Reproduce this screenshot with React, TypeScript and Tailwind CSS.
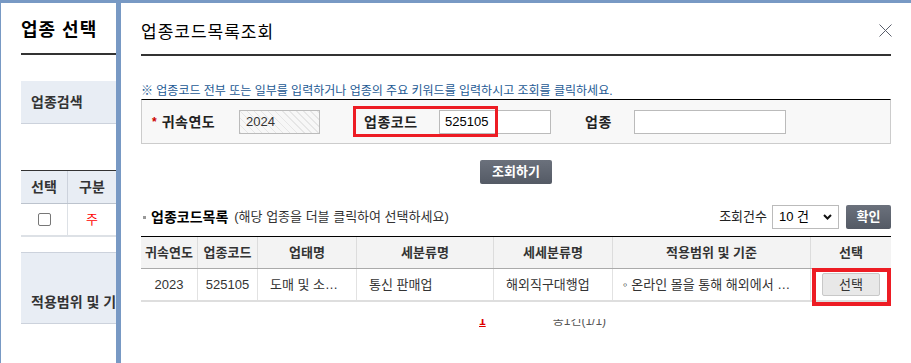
import React from "react";

function CloseIcon() {
  return (
    <svg width="13" height="13" viewBox="0 0 13 13" className="block">
      <path d="M0.5 0.5 L12.5 12.5 M12.5 0.5 L0.5 12.5" stroke="#5a5f6b" strokeWidth="1" fill="none" />
    </svg>
  );
}

function Chevron() {
  return (
    <svg width="9" height="6" viewBox="0 0 9 6" className="block">
      <path d="M1 1 L4.5 4.5 L8 1" stroke="#111" strokeWidth="2" fill="none" />
    </svg>
  );
}

function LeftPanel() {
  return (
    <div className="w-[116px] shrink-0 border-l border-[#7899c4] pl-[20px] overflow-hidden flex flex-col">
      <div className="pt-[16px] leading-[22px] text-[18px] tracking-[1px] font-bold text-black whitespace-nowrap">업종 선택</div>
      <div className="mt-[12px] h-[2px] bg-[#333] w-[200px]" />
      <div className="mt-[26px] h-[43px] w-[200px] bg-[#e8edf4] border-b border-[#ccd2dc] flex items-center pl-[10px] text-[14px] font-bold text-[#333] whitespace-nowrap">
        업종검색
      </div>
      <div className="mt-[46px] w-[200px] border-t border-[#333]">
        <div className="flex h-[33px] bg-[#e8edf4] border-b border-[#bcc3cd]">
          <div className="w-[47px] flex items-center justify-center text-[14px] font-bold text-[#333] border-r border-[#ccd2dc]">선택</div>
          <div className="w-[48px] flex items-center justify-center text-[14px] font-bold text-[#333]">구분</div>
        </div>
        <div className="flex h-[33px] border-b-2 border-[#dde1e6]">
          <div className="w-[47px] flex items-center justify-center border-r border-[#dde1e6]">
            <div className="w-[13px] h-[13px] rounded-[2px] border border-[#777] bg-white" />
          </div>
          <div className="w-[48px] flex items-center justify-center text-[13px] text-[#ff0000]">주</div>
        </div>
      </div>
      <div className="mt-[15px] h-[72px] w-[200px] bg-[#e8edf4] border-t border-b border-[#ccd2dc] flex items-end pb-[13px] pl-[10px] text-[14px] font-bold text-[#333] whitespace-nowrap leading-[16px]">
        적용범위 및 기준
      </div>
    </div>
  );
}

function SearchBox() {
  return (
    <div className="relative mt-0 h-[45px] bg-[#f8f8f8] border-t border-t-black border-l border-r border-b border-l-[#ccc] border-r-[#ccc] border-b-[#ccc] flex items-center">
      <div className="w-[97px] flex items-center pl-[10px] whitespace-nowrap">
        <span className="text-[#c00] text-[12px] font-bold mr-[5px] leading-none">*</span>
        <span className="text-[14px] tracking-[0.5px] font-bold text-[#222]">귀속연도</span>
      </div>
      <div className="w-[81px] h-[24px] border border-[#bbb] flex items-center pl-[6px] text-[13px] text-[#333] bg-[repeating-linear-gradient(45deg,#e6e6e6_0px,#e6e6e6_1px,#f7f7f7_1px,#f7f7f7_5px)]">
        2024
      </div>
      <div className="w-[44px]" />
      <div className="w-[75px] text-[14px] tracking-[0.5px] font-bold text-[#222] whitespace-nowrap">업종코드</div>
      <div className="w-[112px] h-[24px] border border-[#bbb] bg-white flex items-center pl-[5px] text-[13px] text-black">525105</div>
      <div className="w-[34px]" />
      <div className="w-[49px] text-[14px] tracking-[0.5px] font-bold text-[#222] whitespace-nowrap">업종</div>
      <div className="w-[152px] h-[24px] border border-[#bbb] bg-white" />
      <div className="absolute left-[211px] top-[6px] w-[145px] h-[31px] border-[3px] border-[#ed1c24]" />
    </div>
  );
}

const cols = [
  { w: "w-[57px]", h: "귀속연도" },
  { w: "w-[60px]", h: "업종코드" },
  { w: "w-[99px]", h: "업태명" },
  { w: "w-[137px]", h: "세분류명" },
  { w: "w-[119px]", h: "세세분류명" },
  { w: "w-[198px]", h: "적용범위 및 기준" },
  { w: "w-[80px]", h: "선택" },
];

function ResultTable() {
  return (
    <div className="relative mt-[7px] border-t border-black">
      <div className="flex h-[32px] bg-[#f3f3f3] border-b border-[#aaa]">
        {cols.map((c, i) => (
          <div
            key={i}
            className={`${c.w} flex items-center justify-center text-[13px] font-bold text-[#333] whitespace-nowrap ${i < cols.length - 1 ? "border-r border-[#dcdcdc]" : ""}`}
          >
            {c.h}
          </div>
        ))}
      </div>
      <div className="flex h-[33px] border-b-2 border-[#dedede] text-[13px] text-[#333]">
        <div className="w-[57px] flex items-center justify-center border-r border-[#e2e2e2]">2023</div>
        <div className="w-[60px] flex items-center justify-center border-r border-[#e2e2e2]">525105</div>
        <div className="w-[99px] flex items-center pl-[12px] border-r border-[#e2e2e2] whitespace-nowrap">도매 및 소…</div>
        <div className="w-[137px] flex items-center pl-[12px] border-r border-[#e2e2e2] whitespace-nowrap">통신 판매업</div>
        <div className="w-[119px] flex items-center pl-[12px] border-r border-[#e2e2e2] whitespace-nowrap">해외직구대행업</div>
        <div className="w-[198px] flex items-center pl-[10px] border-r border-[#e2e2e2] whitespace-nowrap">◦ 온라인 몰을 통해 해외에서 …</div>
        <div className="w-[80px] flex items-center justify-center">
          <div className="w-[58px] h-[23px] bg-[#e8e8e8] border border-[#c8c8c8] rounded-[2px] flex items-center justify-center text-[13px] text-[#333]">선택</div>
        </div>
      </div>
      <div className="absolute left-[671px] top-[31px] w-[79px] h-[38px] border-[4px] border-[#ed1c24]" />
    </div>
  );
}

function Modal() {
  return (
    <div className="flex-1 border-l-[5px] border-[#7899c4] bg-white px-[20px] flex flex-col">
      <div className="flex items-start justify-between">
        <div className="pt-[19px] leading-[22px] text-[17px] tracking-[1px] text-black">업종코드목록조회</div>
        <div className="pt-[21px] -mr-[1px]">
          <CloseIcon />
        </div>
      </div>
      <div className="mt-[10px] h-[2px] bg-[#333]" />
      <div className="mt-[27px] leading-[16px] text-[12px] text-[#1d5a94] whitespace-nowrap">※ 업종코드 전부 또는 일부를 입력하거나 업종의 주요 키워드를 입력하시고 조회를 클릭하세요.</div>
      <SearchBox />
      <div className="mt-[16px] flex justify-center">
        <div className="w-[72px] h-[24px] rounded-[2px] bg-[linear-gradient(#6b717c,#545a65)] text-white text-[13px] font-bold flex items-center justify-center">조회하기</div>
      </div>
      <div className="mt-[21px] h-[24px] flex items-center">
        <div className="w-[3px] h-[3px] bg-[#999] ml-[2px] mr-[5px]" />
        <span className="text-[14px] font-bold text-black">업종코드목록</span>
        <span className="ml-[6px] text-[13px] text-[#333]">(해당 업종을 더블 클릭하여 선택하세요)</span>
        <div className="flex-1" />
        <span className="text-[13px] text-[#222] mr-[5px]">조회건수</span>
        <div className="w-[67px] h-[24px] border border-[#bbb] bg-white flex items-center justify-between pl-[6px] pr-[6px] text-[13px] text-black">
          <span>10 건</span>
          <Chevron />
        </div>
        <div className="ml-[7px] w-[45px] h-[24px] rounded-[2px] bg-[linear-gradient(#6b717c,#545a65)] text-white text-[13px] font-bold flex items-center justify-center">확인</div>
      </div>
      <ResultTable />
      <div className="mt-[17px] h-[10px] overflow-hidden flex">
        <div className="-mt-[6px] flex leading-[16px] text-[12px]">
          <span className="ml-[338px] text-[#d00] font-bold underline">1</span>
          <span className="ml-[67px] text-[#555]">총1건(1/1)</span>
        </div>
      </div>
    </div>
  );
}

export default function App() {
  return (
    <div className="w-[911px] h-[363px] overflow-hidden bg-white border-t-[3px] border-[#7899c4] flex font-['Liberation_Sans','Noto_Sans_CJK_KR',sans-serif] leading-[16px]">
      <LeftPanel />
      <Modal />
    </div>
  );
}
